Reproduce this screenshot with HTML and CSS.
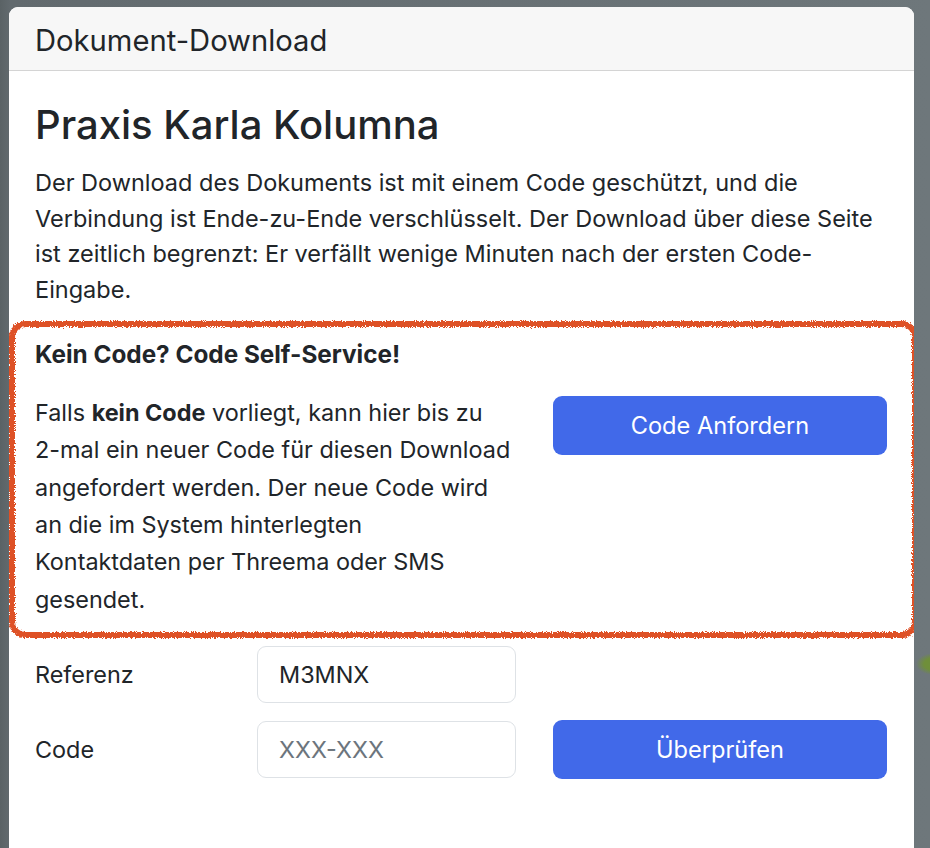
FILE: index.html
```html
<!DOCTYPE html>
<html lang="de">
<head>
    <meta charset="UTF-8">
    <meta name="viewport" content="width=device-width, initial-scale=1.0">
    <title>Dokument-Download</title>
    <link rel="stylesheet" href="styles.css">
</head>
<body>
    <svg class="defs" width="0" height="0" aria-hidden="true">
        <filter id="rough" x="-5%" y="-5%" width="110%" height="110%">
            <feTurbulence type="fractalNoise" baseFrequency="1.1" numOctaves="2" seed="7" result="noise"/>
            <feDisplacementMap in="SourceGraphic" in2="noise" scale="5" xChannelSelector="R" yChannelSelector="G"/>
        </filter>
    </svg>

    <div class="card">
        <div class="card-header">Dokument-Download</div>
        <div class="card-body">
            <h2>Praxis Karla Kolumna</h2>
            <p class="lead">Der Download des Dokuments ist mit einem Code geschützt, und die<br>
                Verbindung ist Ende-zu-Ende verschlüsselt. Der Download über diese Seite<br>
                ist zeitlich begrenzt: Er verfällt wenige Minuten nach der ersten Code-<br>
                Eingabe.</p>

            <div class="self-service">
                <h6>Kein Code? Code Self-Service!</h6>
                <div class="ss-row">
                    <p>Falls <strong>kein Code</strong> vorliegt, kann hier bis zu<br>
                        2-mal ein neuer Code für diesen Download<br>
                        angefordert werden. Der neue Code wird<br>
                        an die im System hinterlegten<br>
                        Kontaktdaten per Threema oder SMS<br>
                        gesendet.</p>
                    <button type="button" class="btn">Code Anfordern</button>
                </div>
            </div>

            <form class="code-form" action="#" method="POST">
                <label for="ref">Referenz</label>
                <input type="text" id="ref" name="ref" value="M3MNX">
                <span></span>

                <label for="code">Code</label>
                <input type="text" id="code" name="code" placeholder="XXX-XXX">
                <button type="submit" class="btn">Überprüfen</button>
            </form>
        </div>
    </div>
</body>
</html>
```

FILE: styles.css
```css
body {
    margin: 0;
    height: 848px;
    overflow: hidden;
    font-family: Inter, "Noto Sans", sans-serif;
    font-size: 23.4px;
    color: #212529;
    background-color: #687074;
    background-image:
        radial-gradient(ellipse 18px 11px at 934px 664px, #6f8f3a 55%, transparent 100%),
        linear-gradient(90deg, #5a6265 0, #626a6e 10px, #6e777b 100%);
}

.defs {
    position: absolute;
}

.card {
    margin: 7px 16px 0 9px;
    min-height: 900px;
    background-color: #fff;
    border-radius: 9px 9px 0 0;
    overflow: hidden;
}

.card-header {
    height: 64px;
    box-sizing: border-box;
    display: flex;
    align-items: center;
    padding: 4px 26px 0;
    background-color: #f7f7f7;
    border-bottom: 1.5px solid #d4d4d4;
    font-size: 29.2px;
}

.card-body {
    padding: 30px 27px 0 26px;
}

h2 {
    margin: 0 0 16px;
    font-size: 40px;
    font-weight: 500;
    line-height: 48px;
}

p {
    margin: 0;
    line-height: 37.4px;
}

.lead {
    font-size: 23.5px;
    line-height: 35.7px;
}

.self-service {
    position: relative;
    margin-top: 28px;
}

/* hand-drawn marker around the self-service block */
.self-service::after {
    content: "";
    position: absolute;
    top: -15px;
    left: -26px;
    right: -31px;
    bottom: -20px;
    border: 6px solid #de5128;
    border-radius: 16px;
    filter: url(#rough);
    pointer-events: none;
}

h6 {
    margin: 0 0 22px;
    font-size: 24.3px;
    font-weight: 700;
    line-height: 36px;
}

.ss-row {
    display: grid;
    grid-template-columns: 1fr 334px;
    gap: 20px;
    align-items: start;
}

.ss-row .btn {
    margin-top: 2px;
}

.btn {
    height: 59px;
    border: none;
    border-radius: 9px;
    background-color: #4169e9;
    color: #fff;
    font-family: inherit;
    font-size: 23.6px;
    cursor: pointer;
}

.code-form {
    display: grid;
    grid-template-columns: 185px 259px 334px;
    column-gap: 37px;
    row-gap: 17px;
    align-items: center;
    margin-top: 28px;
}

input[type="text"] {
    height: 57px;
    box-sizing: border-box;
    padding: 0 21px;
    border: 1.5px solid #dee2e6;
    border-radius: 9px;
    font-family: inherit;
    font-size: 23.4px;
    color: #212529;
}

input::placeholder {
    color: #6c757d;
}
```
